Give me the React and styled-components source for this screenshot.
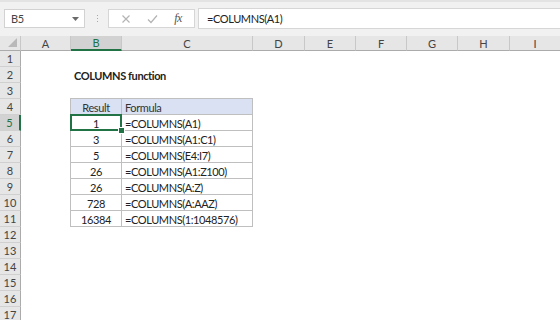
import styled, { createGlobalStyle, css } from 'styled-components'

const GlobalStyle = createGlobalStyle`
    html, body {
        margin: 0;
        padding: 0;
        background: #ffffff;
    }
    body {
        font-family: Lato, "Open Sans", "Liberation Sans", sans-serif;
        overflow: hidden;
    }
`

const Window = styled.div`
    width: 560px;
    height: 320px;
    overflow: hidden;
    background: #ffffff;
`

const FormulaBar = styled.div`
    display: flex;
    align-items: center;
    height: 36px;
    box-sizing: border-box;
    padding: 0 0 1px 4px;
    background: #f1f1f1;
    border-top: 2px solid #e3e3e3;
`

const NameBox = styled.div`
    display: flex;
    align-items: center;
    justify-content: space-between;
    width: 81px;
    height: 19px;
    box-sizing: border-box;
    padding: 0 5px 0 6px;
    background: #ffffff;
    border: 1px solid #d2d2d2;
    font-size: 11px;
    letter-spacing: -0.3px;
    color: #444444;
`

const Separator = styled.div`
    display: flex;
    flex-direction: column;
    gap: 2px;
    margin: 0 10px 0 12px;
    span {
        width: 1px;
        height: 1px;
        background: #a8a8a8;
    }
`

const FxButtons = styled.div`
    display: flex;
    align-items: center;
    justify-content: space-around;
    width: 87px;
    height: 19px;
    box-sizing: border-box;
    padding: 0 4px;
    background: #ffffff;
    border: 1px solid #d6d6d6;
`

const FxLabel = styled.span`
    font-family: "Liberation Serif", serif;
    font-style: italic;
    font-size: 12px;
    color: #555555;
    letter-spacing: -0.5px;
`

const FormulaInput = styled.div`
    flex: 1;
    display: flex;
    align-items: center;
    height: 19px;
    margin-left: 3px;
    padding-left: 8px;
    background: #ffffff;
    border: 1px solid #d6d6d6;
    border-right: none;
    font-size: 11px;
    letter-spacing: -0.4px;
    color: #222222;
`

const Sheet = styled.div`
    display: grid;
    grid-template-columns: 21px 50px 51px 131px 52px 51px 51px 51px 52px 51px;
    grid-template-rows: 15px repeat(17, 16px);
    font-size: 11px;
    letter-spacing: -0.4px;
    color: #222222;
`

const Corner = styled.div`
    position: relative;
    background: #e6e6e6;
    border-right: 1px solid #c8c8c8;
    border-bottom: 1px solid #ababab;
    &::after {
        content: '';
        position: absolute;
        right: 3px;
        bottom: 3px;
        border-style: solid;
        border-width: 0 0 9px 9px;
        border-color: transparent transparent #b9b9b9 transparent;
    }
`

const ColHeader = styled.div`
    display: flex;
    align-items: center;
    justify-content: center;
    box-sizing: border-box;
    background: #e6e6e6;
    border-right: 1px solid #c8c8c8;
    border-bottom: 1px solid #ababab;
    font-size: 11px;
    letter-spacing: 0;
    color: #444444;
    ${p => p.$selected && css`
        background: #d2d2d2;
        color: #217346;
        border-bottom: 2px solid #217346;
    `}
`

const RowHeader = styled.div`
    display: flex;
    align-items: center;
    justify-content: center;
    box-sizing: border-box;
    background: #e6e6e6;
    border-right: 1px solid #ababab;
    border-bottom: 1px solid #d0d0d0;
    font-size: 11px;
    letter-spacing: 0;
    color: #444444;
    ${p => p.$selected && css`
        background: #d2d2d2;
        color: #217346;
        border-right: 2px solid #217346;
    `}
`

const Cell = styled.div`
    position: relative;
    display: flex;
    align-items: center;
    justify-content: ${p => p.$align === 'center' ? 'center' : 'flex-start'};
    box-sizing: border-box;
    padding: 1px 3px 0;
    white-space: nowrap;
    overflow: visible;
    font-weight: ${p => p.$bold ? 700 : 400};
    ${p => p.$table && css`
        border-right: 1px solid #bfbfbf;
        border-bottom: 1px solid #bfbfbf;
    `}
    ${p => p.$table && p.$first && css`
        border-top: 1px solid #bfbfbf;
        margin-top: -1px;
    `}
    ${p => p.$table && p.$left && css`
        border-left: 1px solid #bfbfbf;
        margin-left: -1px;
    `}
    ${p => p.$head && css`
        background: #d9e1f2;
        color: #333333;
    `}
    ${p => p.$selected && css`
        &::before {
            content: '';
            position: absolute;
            inset: -1px -1px -1px -1px;
            border: 2px solid #217346;
            z-index: 1;
        }
        &::after {
            content: '';
            position: absolute;
            right: -4px;
            bottom: -4px;
            width: 5px;
            height: 5px;
            background: #217346;
            border: 1px solid #ffffff;
            z-index: 2;
        }
    `}
`

const columns = ['A', 'B', 'C', 'D', 'E', 'F', 'G', 'H', 'I']

const examples = [
    ['1', '=COLUMNS(A1)'],
    ['3', '=COLUMNS(A1:C1)'],
    ['5', '=COLUMNS(E4:I7)'],
    ['26', '=COLUMNS(A1:Z100)'],
    ['26', '=COLUMNS(A:Z)'],
    ['728', '=COLUMNS(A:AAZ)'],
    ['16384', '=COLUMNS(1:1048576)'],
]

// cell content keyed by "row-col"
const cells = {}
cells['2-B'] = { text: 'COLUMNS function', bold: true }
cells['4-B'] = { text: 'Result', align: 'center', table: true, head: true, first: true, left: true }
cells['4-C'] = { text: 'Formula', table: true, head: true, first: true }
examples.forEach(([result, formula], i) => {
    const row = 5 + i
    cells[`${row}-B`] = { text: result, align: 'center', table: true, left: true, selected: row === 5 }
    cells[`${row}-C`] = { text: formula, table: true }
})

const CrossIcon = () => (
    <svg width="10" height="10" viewBox="0 0 10 10">
        <path d="M1.5 1.5 L8.5 8.5 M8.5 1.5 L1.5 8.5" stroke="#b4b4b4" strokeWidth="1.2" fill="none" />
    </svg>
)

const CheckIcon = () => (
    <svg width="11" height="10" viewBox="0 0 11 10">
        <path d="M1 5.5 L4 8.5 L10 1.5" stroke="#b4b4b4" strokeWidth="1.2" fill="none" />
    </svg>
)

const DropArrow = () => (
    <svg width="7" height="4" viewBox="0 0 7 4">
        <path d="M0 0 H7 L3.5 4 Z" fill="#6a6a6a" />
    </svg>
)

export default function App() {
    const rows = Array.from({ length: 17 }, (_, i) => i + 1)

    return (
        <Window>
            <GlobalStyle />
            <FormulaBar>
                <NameBox>
                    <span>B5</span>
                    <DropArrow />
                </NameBox>
                <Separator><span /><span /><span /></Separator>
                <FxButtons>
                    <CrossIcon />
                    <CheckIcon />
                    <FxLabel>fx</FxLabel>
                </FxButtons>
                <FormulaInput>=COLUMNS(A1)</FormulaInput>
            </FormulaBar>

            <Sheet>
                <Corner />
                {columns.map(c => (
                    <ColHeader key={c} $selected={c === 'B'}>{c}</ColHeader>
                ))}
                {rows.map(r => [
                    <RowHeader key={`h${r}`} $selected={r === 5}>{r}</RowHeader>,
                    ...columns.map(c => {
                        const cell = cells[`${r}-${c}`]
                        if (!cell) return <Cell key={`${r}-${c}`} />
                        return (
                            <Cell
                                key={`${r}-${c}`}
                                $align={cell.align}
                                $bold={cell.bold}
                                $table={cell.table}
                                $head={cell.head}
                                $first={cell.first}
                                $left={cell.left}
                                $selected={cell.selected}
                            >
                                {cell.text}
                            </Cell>
                        )
                    })
                ])}
            </Sheet>
        </Window>
    )
}
